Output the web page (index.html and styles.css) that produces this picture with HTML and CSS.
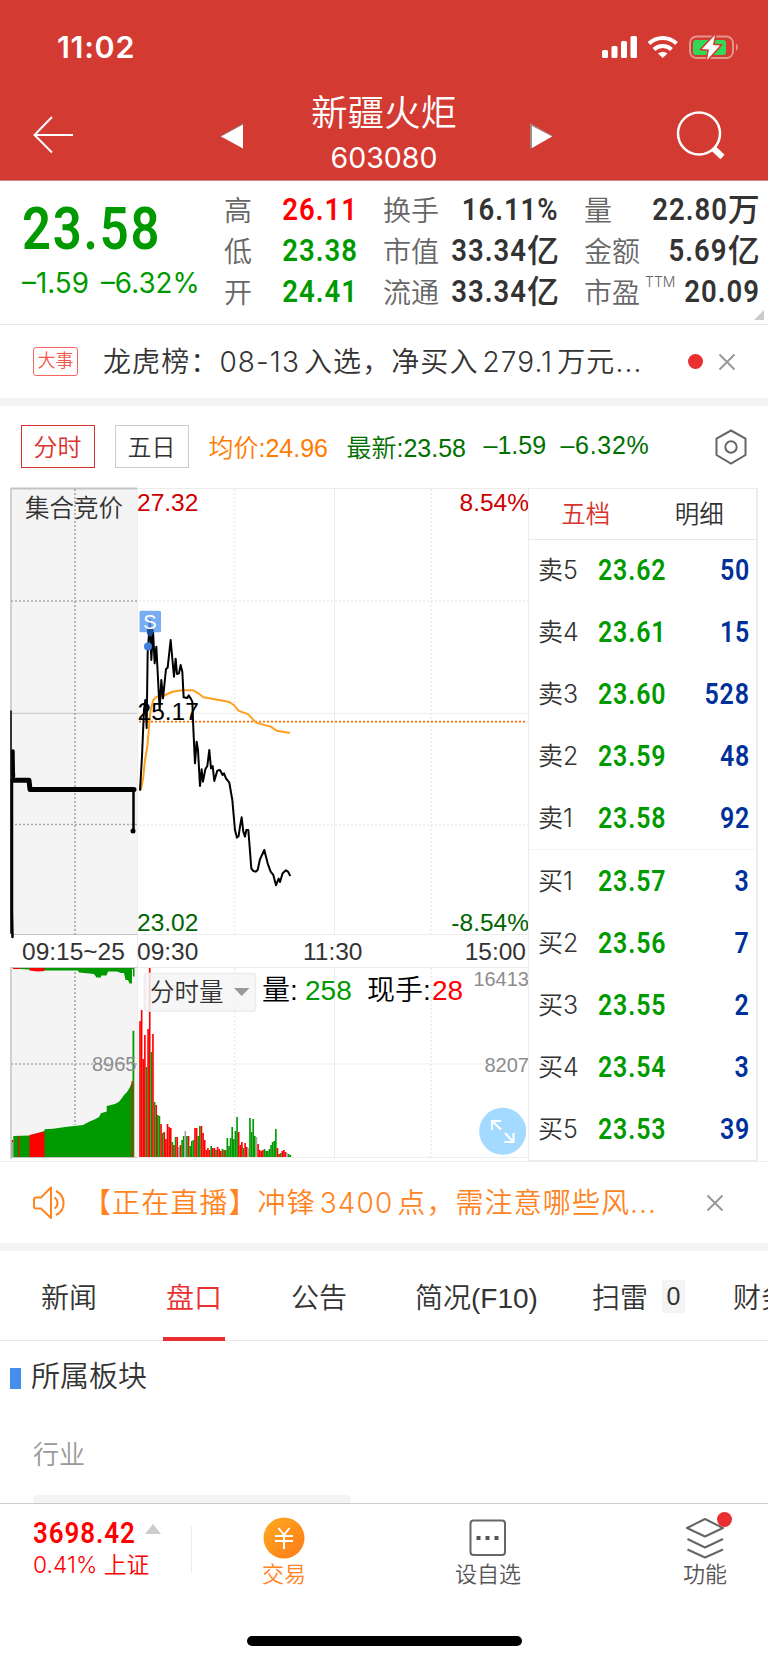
FILE: index.html
```html
<!DOCTYPE html>
<html lang="zh-CN">
    <head>
        <meta charset="UTF-8" />
        <meta name="viewport" content="width=device-width, initial-scale=1.0" />
        <title>新疆火炬 603080</title>
        <link rel="stylesheet" href="styles.css" />
    </head>
    <body>
        <header class="header">
            <div class="status-bar">
                <span class="clock">11:02</span>
                <svg class="status-icons" width="138" height="26" viewBox="601 34 138 26">
                    <g fill="#fff">
                        <rect x="602" y="50" width="6" height="8" rx="1.5" />
                        <rect x="611.5" y="46" width="6" height="12" rx="1.5" />
                        <rect x="621" y="41" width="6" height="17" rx="1.5" />
                        <rect x="630.500" y="36" width="6.500" height="22" rx="1.5" />
                    </g>
                    <g fill="none" stroke="#fff" stroke-width="4">
                        <path d="M649 43.500 A20 20 0 0 1 676.500 43.500" />
                        <path d="M654 49.500 A12.500 12.500 0 0 1 671.500 49.500" />
                    </g>
                    <path d="M658 53.500 Q662.700 50 667.500 53.500 L662.700 58 Z" fill="#fff" />
                    <rect x="690" y="36.500" width="43" height="21.500" rx="6.500" fill="none" stroke="#e6938e" stroke-width="2" />
                    <path d="M736 43.500 Q740 47 736 51 Z" fill="#e6938e" />
                    <rect x="693" y="40" width="33" height="15" rx="3" fill="#32d957" />
                    <path d="M715 35 L702 49 L709 49.500 L707 60 L720 45.500 L713 45 Z" fill="#fff" stroke="#d33a32" stroke-width="3" paint-order="stroke" />
                </svg>
            </div>
            <div class="nav">
                <svg class="back" width="42" height="38" viewBox="0 0 42 38">
                    <path d="M20 1 L2.500 19 L20 36.500 M2.500 19 H41" fill="none" stroke="#fff" stroke-width="2" />
                </svg>
                <svg class="prev" width="24" height="26" viewBox="0 0 24 26">
                    <path d="M0 13 L23 0 V4 L2 15 Z" fill="#a06a66" />
                    <path d="M1 13.500 L23 1.500 V25.500 Z" fill="#fff" />
                </svg>
                <div class="stock">
                    <div class="stock-name">新疆火炬</div>
                    <div class="stock-code">603080</div>
                </div>
                <svg class="next" width="24" height="26" viewBox="0 0 24 26">
                    <path d="M0 0 L23 13 L0 26 Z" fill="#a08885" />
                    <path d="M2 3 L22 13.500 L2 25 Z" fill="#fff" />
                </svg>
                <svg class="search" width="50" height="50" viewBox="0 0 50 50">
                    <circle cx="23" cy="23.500" r="21" fill="none" stroke="#fff" stroke-width="2.500" />
                    <path d="M37 38 L46.500 47" stroke="#fff" stroke-width="6" />
                </svg>
            </div>
        </header>

        <section class="quote">
            <div class="price-box">
                <div class="price"><span class="din">23.58</span></div>
                <div class="change"><span>–1.59</span><span>–6.32%</span></div>
            </div>
            <dl class="stats stats-a">
                <dt>高</dt>
                <dd class="red"><span class="din">26.11</span></dd>
                <dt>低</dt>
                <dd class="green"><span class="din">23.38</span></dd>
                <dt>开</dt>
                <dd class="green"><span class="din">24.41</span></dd>
            </dl>
            <dl class="stats stats-b">
                <dt>换手</dt>
                <dd><span class="din">16.11%</span></dd>
                <dt>市值</dt>
                <dd><span class="din">33.34</span>亿</dd>
                <dt>流通</dt>
                <dd><span class="din">33.34</span>亿</dd>
            </dl>
            <dl class="stats stats-c">
                <dt>量</dt>
                <dd><span class="din">22.80</span>万</dd>
                <dt>金额</dt>
                <dd><span class="din">5.69</span>亿</dd>
                <dt>市盈<sup>TTM</sup></dt>
                <dd><span class="din">20.09</span></dd>
            </dl>
            <i class="corner"></i>
        </section>

        <section class="event">
            <span class="event-tag">大事</span>
            <span class="event-text">龙虎榜：08-13 入选，净买入 279.1 万元...</span>
            <i class="dot"></i>
            <svg class="close" width="18" height="18" viewBox="0 0 18 18"><path d="M1.500 1.500 L16.500 16.500 M16.500 1.500 L1.500 16.500" /></svg>
        </section>

        <section class="toolbar">
            <button class="period active">分时</button>
            <button class="period">五日</button>
            <span class="avg">均价:24.96</span>
            <span class="latest">最新:23.58</span>
            <span class="diff">–1.59</span>
            <span class="rate">–6.32%</span>
            <svg class="setting" width="32" height="36" viewBox="0 0 32 36" fill="none" stroke="#666" stroke-width="2">
                <path d="M16 1.500 L30.500 9.500 V26 L16 34.500 L1.500 26 V9.500 Z" />
                <circle cx="16" cy="18" r="5.700" />
            </svg>
        </section>

        <section class="market">
            <svg class="chart" width="528" height="673" viewBox="0 488 528 673">
                <!-- 集合竞价 -->
                <rect x="11" y="488" width="126" height="446" fill="#f4f4f4" />
                <rect x="11" y="967" width="126" height="190" fill="#f4f4f4" />
                <g stroke="#c4c4c4" fill="none">
                    <path d="M10.500 488.500 H137" stroke-width="2" />
                    <path d="M11 488 V934 M11 967 V1159" stroke-width="1.500" />
                    <path d="M11 713.300 H137 M11 934.500 H137 M11 967.500 H137 M11 1157.500 H137" />
                    <path d="M75 489 V935 M75 968 V1125 M11 601 H137 M11 824.500 H137 M11 1064 H137" stroke="#aaa" stroke-width="1.700" stroke-dasharray="2 2" />
                </g>
                <!-- 网格 -->
                <g stroke="#ececec" fill="none">
                    <path d="M137.500 488 V1157 M334.500 488 V934 M334.500 967 V1159 M138 488.500 H529 M138 713.300 H529 M138 934.500 H529 M138 967.500 H529 M138 1157.500 H529" />
                    <path d="M234.700 489 V934 M431 489 V934 M234.700 968 V1157 M431 968 V1157 M139 601 H529 M139 825 H529 M139 1064 H485" stroke-width="1.700" stroke-dasharray="2 2" />
                </g>
                <path d="M139 721.700 H527" stroke="#ff6a00" stroke-width="1.700" stroke-dasharray="2 2" />

                <text class="t cjk" x="25" y="517">集合竞价</text>
                <text class="t up" x="137" y="511">27.32</text>
                <text class="t up" x="529" y="511" text-anchor="end">8.54%</text>
                <text class="t down" x="137" y="930.500">23.02</text>
                <text class="t down" x="529" y="930.500" text-anchor="end">-8.54%</text>

                <!-- 竞价走势 -->
                <g stroke="#000" fill="none" stroke-linecap="round" stroke-linejoin="round">
                    <path d="M11 711 V933" stroke-width="1.500" />
                    <path d="M12.500 751 L14 776 L12 781 V912 L12.500 937" stroke-width="2.500" />
                    <path d="M13 751 V776" stroke-width="3.500" />
                    <path d="M13 780.300 H29 L30 789.500 H134" stroke-width="5" />
                    <path d="M133.500 790 V830" stroke-width="2.500" />
                </g>
                <circle cx="133" cy="831" r="2.500" />

                <!-- 分时走势 -->
                <g transform="translate(0 600) scale(.3333)" fill="none" stroke-linejoin="round">
                    <polyline id="avgLine" stroke="#ff9f1c" stroke-width="6" />
                    <polyline id="priceLine" stroke="#000" stroke-width="6" />
                </g>
                <text class="t" x="137.500" y="720">25.17</text>
                <rect x="139.500" y="610.700" width="21.500" height="21.500" rx="1.500" fill="#5799ed" fill-opacity=".8" />
                <path d="M147 628 h6 v6 l-3 3 l-3 -3 Z" fill="#1d4f97" />
                <text class="mark" x="150" y="628.500" text-anchor="middle">S</text>
                <circle cx="148" cy="646.500" r="4" fill="#3f80db" />

                <text class="t time" x="22" y="959.500">09:15~25</text>
                <text class="t time" x="137" y="959.500">09:30</text>
                <text class="t time" x="303" y="959.500">11:30</text>
                <text class="t time" x="526" y="959.500" text-anchor="end">15:00</text>

                <!-- 竞价量 -->
                <path d="M11 1140 H13 V1157 H11 Z" fill="#aaa" />
                <path d="M13.300 1136 L29.500 1135.500 L44.500 1131 V1129.300 L53 1128.700 L67 1126.700 L77 1125.700 L83 1125 L89 1121.700 L95 1119.300 L99 1117 L101 1113.300 L106.700 1111.500 V1106 L115 1104 L119 1101.700 L122 1098 L124 1095 L127 1092 L129.500 1088 L131.700 1083 H132.500 V1030.700 H134.300 V1157 H13.300 Z" fill="#009a00" />
                <path d="M29.500 1135 L44.500 1131.500 V1157 H29.500 Z M18 1136 H19.200 V1157 H18 Z M12 1140 H13.300 V1142 H12 Z M131.500 1081 H132.700 V1157 H131.500 Z" fill="#f00" />
                <path d="M20 968 H134.500 V976.500 H133 V969 H132 V983.500 H129.500 L128 980 H125.500 L124 973 H121 L117 971.500 H108 L106.500 975.500 H101 V977.500 H96.500 L94 974 L79 972.500 L78 970.500 H45 L20 969 Z" fill="#009a00" />
                <path d="M29.500 968 H44.500 V971 L38 971.500 L29.500 970.500 Z M13 968 H20 V969 H13 Z" fill="#f00" />

                <g id="volume"></g>

                <text class="t vol" x="136.500" y="1070.500" text-anchor="end">8965</text>
                <text class="t vol" x="529" y="986" text-anchor="end">16413</text>
                <text class="t vol" x="529" y="1071.500" text-anchor="end">8207</text>

                <rect x="144.500" y="973.500" width="111" height="37.500" rx="2" fill="#f4f4f4" fill-opacity=".85" stroke="#ececec" stroke-width="1.500" />
                <text class="t cjk" x="150" y="1001">分时量</text>
                <path d="M234 988 H249.500 L241.700 996 Z" fill="#999" />
                <text class="v" x="262" y="999.500">量:</text>
                <text class="v green-fill" x="305" y="999.500">258</text>
                <text class="v" x="367" y="999.500">现手:</text>
                <text class="v red-fill" x="432" y="999.500">28</text>

                <circle cx="502.700" cy="1131.300" r="23.500" fill="#a4daff" />
                <path d="M501 1129.500 L492 1121 M492 1130 V1121 H501 M505 1133 L513.500 1142 M513.500 1133 V1142 H504.500" fill="none" stroke="#fff" stroke-width="2" />
            </svg>

            <div class="book">
                <div class="book-tabs"><span class="active">五档</span><span>明细</span></div>
                <div class="book-row"><span>卖5</span><b><span class="din">23.62</span></b><em><span class="din">50</span></em></div>
                <div class="book-row"><span>卖4</span><b><span class="din">23.61</span></b><em><span class="din">15</span></em></div>
                <div class="book-row"><span>卖3</span><b><span class="din">23.60</span></b><em><span class="din">528</span></em></div>
                <div class="book-row"><span>卖2</span><b><span class="din">23.59</span></b><em><span class="din">48</span></em></div>
                <div class="book-row last-sell"><span>卖1</span><b><span class="din">23.58</span></b><em><span class="din">92</span></em></div>
                <div class="book-row"><span>买1</span><b><span class="din">23.57</span></b><em><span class="din">3</span></em></div>
                <div class="book-row"><span>买2</span><b><span class="din">23.56</span></b><em><span class="din">7</span></em></div>
                <div class="book-row"><span>买3</span><b><span class="din">23.55</span></b><em><span class="din">2</span></em></div>
                <div class="book-row"><span>买4</span><b><span class="din">23.54</span></b><em><span class="din">3</span></em></div>
                <div class="book-row"><span>买5</span><b><span class="din">23.53</span></b><em><span class="din">39</span></em></div>
            </div>
        </section>

        <section class="live">
            <svg width="34" height="34" viewBox="0 0 34 34" fill="none" stroke="#ff841f" stroke-width="2" stroke-linejoin="round">
                <path d="M18 1.500 V32 L8 22.500 H3 Q1 22.500 1 20.500 V13.500 Q1 11.500 3 11.500 H8 Z" />
                <path d="M21.500 11.500 A6.500 6.500 0 0 1 21.500 22.500 M23 5 A13.300 13.300 0 0 1 23 29" />
            </svg>
            <span class="live-text">【正在直播】冲锋 3400 点，需注意哪些风...</span>
            <svg class="close" width="18" height="18" viewBox="0 0 18 18"><path d="M1.500 1.500 L16.500 16.500 M16.500 1.500 L1.500 16.500" /></svg>
        </section>

        <nav class="tabs">
            <a>新闻</a>
            <a class="active">盘口</a>
            <a>公告</a>
            <a class="f10">简况(F10)</a>
            <a class="mine">扫雷<span class="badge">0</span></a>
            <a class="finance">财务</a>
        </nav>

        <section class="plate">
            <h2>所属板块</h2>
            <div class="plate-label">行业</div>
            <div class="plate-card"></div>
        </section>

        <footer class="footer">
            <div class="index">
                <div class="index-value"><span class="din">3698.42</span><i></i></div>
                <div class="index-rate">0.41% 上证</div>
            </div>
            <div class="action trade">
                <svg width="42" height="42" viewBox="0 0 42 42">
                    <defs>
                        <linearGradient id="gold" x1="0" y1="0" x2="1" y2="1">
                            <stop offset="0" stop-color="#ffab1f" />
                            <stop offset="1" stop-color="#fd7a1a" />
                        </linearGradient>
                    </defs>
                    <circle cx="21" cy="21" r="20.500" fill="url(#gold)" />
                    <path d="M15.500 11 L21 18 L26.500 11 M12 19 H30 M12 24 H30 M21 18 V32" fill="none" stroke="#fff" stroke-width="2" />
                </svg>
                <span>交易</span>
            </div>
            <div class="action pick">
                <svg width="42" height="42" viewBox="0 0 42 42">
                    <rect x="3.500" y="3.500" width="34.500" height="34.500" rx="3" fill="none" stroke="#666" stroke-width="2" />
                    <path d="M9.500 21 h4 m5 0 h4 m5 0 h4" stroke="#555" stroke-width="4" />
                </svg>
                <span>设自选</span>
            </div>
            <div class="action more">
                <svg width="42" height="42" viewBox="0 0 42 42" fill="none" stroke="#666" stroke-width="2" stroke-linejoin="round">
                    <path d="M3 11 L21 2 L39 11 L21 19.500 Z M3.500 22 L21 30.500 L39 22 M3.500 32.500 L21 40.500 L39 32.500" />
                </svg>
                <i class="dot"></i>
                <span>功能</span>
            </div>
            <div class="home-bar"></div>
        </footer>

        <script src="chart.js"></script>
    </body>
</html>
```

FILE: styles.css
```css
* {
    box-sizing: border-box;
}

body {
    width: 768px;
    height: 1663px;
    margin: 0;
    overflow: hidden;
    background: #fff;
    color: #333;
    font-family: Inter, 'Noto Sans CJK SC', sans-serif;
    font-weight: 350;
}

svg {
    display: block;
    flex: none;
}

/* 数字字体，略窄 */
.din {
    display: inline-block;
    font-family: Roboto, sans-serif;
    font-weight: 600;
    letter-spacing: 0.035em;
    transform: scaleX(0.86);
    transform-origin: left center;
}

.red {
    color: #f00;
}

.green {
    color: #009a00;
}

/* 顶部 */
.header {
    height: 181px;
    background: #d33a32;
    border-bottom: 1px solid #c48c88;
    color: #fff;
}

.status-bar {
    display: flex;
    justify-content: space-between;
    height: 94px;
    padding: 34px 29px 0 57px;
}

.clock {
    font-size: 30.5px;
    font-weight: 600;
    letter-spacing: 0.7px;
    line-height: 26px;
}

.nav {
    display: flex;
    align-items: center;
    height: 86px;
    padding: 0 42px 4px 32px;
}

.prev {
    margin-left: 146px;
    margin-top: 1px;
}

.stock {
    width: 286px;
    text-align: center;
    padding-right: 6px;
}

.next {
    margin-top: 1px;
}

.stock-name {
    font-size: 36.5px;
    line-height: 42px;
}

.stock-code {
    font-size: 28.5px;
    font-weight: 400;
    line-height: 42px;
    padding-top: 3px;
}

.search {
    margin-left: 122px;
}

/* 行情 */
.quote {
    position: relative;
    display: flex;
    height: 144px;
    border-bottom: 1px solid #e8e8e8;
}

.price-box {
    width: 224px;
    padding: 12px 0 0 22px;
    color: #009a00;
}

.price {
    font-size: 59px;
    line-height: 70px;
}

.change {
    display: flex;
    gap: 12px;
    font-size: 27.8px;
    font-weight: 400;
    line-height: 38px;
}

.stats {
    display: grid;
    grid-template-columns: auto 1fr;
    grid-auto-rows: 41px;
    align-content: start;
    margin: 0;
    padding-top: 8px;
    line-height: 41px;
    white-space: nowrap;
}

.stats dt {
    padding-top: 2px;
    color: #666;
    font-size: 28px;
}

.stats dd {
    display: flex;
    justify-content: flex-end;
    margin: 0;
    font-size: 32px;
    font-weight: 500;
}

.stats .din {
    transform-origin: right center;
}

.stats-a {
    width: 134px;
}

.stats-b {
    width: 176px;
    margin-left: 25px;
}

.stats-c {
    width: 175px;
    margin-left: 25px;
}

.stats sup {
    position: absolute;
    margin: -12px 0 0 5px;
    font-size: 14px;
}

.corner {
    position: absolute;
    right: 4px;
    bottom: 4px;
    border: solid transparent;
    border-width: 5px;
    border-right-color: #ccc;
    border-bottom-color: #ccc;
}

.event {
    display: flex;
    align-items: center;
    height: 81px;
    padding: 0 24px 0 33px;
    border-bottom: 8px solid #f4f4f4;
}

.event-tag {
    width: 45px;
    height: 29px;
    border: 1px solid #f7665e;
    border-radius: 3px;
    color: #f4574e;
    font-size: 18px;
    line-height: 26px;
    text-align: center;
}

.event-text {
    width: 565px;
    margin-left: 25px;
    padding-bottom: 4px;
    font-size: 28px;
    letter-spacing: 1.1px;
    word-spacing: -5px;
    white-space: nowrap;
}

.dot {
    width: 15px;
    height: 15px;
    border-radius: 50%;
    background: #e92f30;
}

.event .dot {
    margin-left: 20px;
}

.close {
    fill: none;
    stroke: #999;
    stroke-width: 2;
}

.event .close {
    margin-left: 15px;
}

/* 分时工具栏 */
.toolbar {
    display: flex;
    align-items: center;
    height: 82px;
    padding-left: 20.5px;
    font-family: 'Liberation Sans', 'Noto Sans CJK SC', sans-serif;
    font-size: 25px;
    white-space: nowrap;
    color: #007000;
}

.period {
    width: 74px;
    height: 43px;
    margin: 0 20px 2px 0;
    padding: 0 0 2px;
    border: 1px solid #ccc;
    background: #fff;
    color: #333;
    font: 350 24px 'Noto Sans CJK SC', sans-serif;
}

.period.active {
    border-color: #d9332e;
    color: #d9332e;
}

.toolbar > span {
    padding-bottom: 3px;
}

.avg {
    width: 138px;
    color: #ff7a00;
}

.latest {
    width: 137px;
}

.diff {
    width: 77px;
}

.rate {
    letter-spacing: 0.7px;
}

.setting {
    margin-left: auto;
    margin-right: 21px;
}

.market {
    display: flex;
    height: 674px;
    border-bottom: 1px solid #ececec;
}

.chart {
    font-family: 'Liberation Sans', 'Noto Sans CJK SC', sans-serif;
    overflow: visible;
}

.t {
    font-size: 24.5px;
}

.cjk,
.time {
    fill: #333;
}

.up {
    fill: #c00;
}

.down {
    fill: #006400;
}

.t.vol {
    font-size: 20px;
    fill: #8c8c8c;
}

.v {
    font-size: 28px;
}

.green-fill {
    fill: #009a00;
}

.red-fill {
    fill: #f00;
}

.mark {
    font-size: 20px;
    fill: #fff;
}

.book {
    width: 230px;
    border: 1px solid #ececec;
    border-width: 1px 2px 1px 1px;
}

.book-tabs {
    display: flex;
    height: 51px;
    border-bottom: 1px solid #e8e8e8;
    font-size: 24.5px;
    line-height: 50px;
}

.book-tabs span {
    width: 50%;
    text-align: center;
}

.book-row {
    display: flex;
    align-items: center;
    height: 62.1px;
    padding: 0 6px 3px 9px;
    font-size: 25px;
}

.book-tabs .active {
    color: #d9332e;
}

.book-row > span {
    width: 60px;
    padding-bottom: 3px;
}

.book-row b {
    color: #009a00;
    font-size: 29px;
}

.book-row em {
    margin-left: auto;
    color: #00309a;
    font-size: 29px;
    font-style: normal;
}

.book-row em .din {
    transform-origin: right center;
}

.last-sell {
    border-bottom: 1px solid #f4f4f4;
}

.live {
    display: flex;
    align-items: center;
    height: 89px;
    padding-left: 33px;
    border-bottom: 8px solid #f4f4f4;
    color: #ff841f;
}

.live-text {
    width: 589px;
    margin-left: 16px;
    padding-bottom: 4px;
    font-size: 28px;
    letter-spacing: 1.1px;
    word-spacing: -5px;
    white-space: nowrap;
}

.live .close {
    margin-left: 34px;
}

.tabs {
    display: flex;
    height: 90px;
    padding-left: 41px;
    border-bottom: 1px solid #e8e8e8;
    font-family: 'Liberation Sans', 'Noto Sans CJK SC', sans-serif;
    font-size: 28px;
    line-height: 95px;
    white-space: nowrap;
}

.tabs a {
    flex: none;
    margin-right: 69px;
}

.tabs .active {
    position: relative;
    color: #e92f30;
}

.tabs .active::after {
    content: '';
    position: absolute;
    left: -3px;
    right: -3px;
    bottom: -1px;
    height: 4px;
    background: #e92f30;
}

.tabs .f10 {
    margin-left: -1px;
    margin-right: 54px;
}

.tabs .mine {
    display: flex;
    align-items: start;
    margin-right: 48px;
}

.badge {
    width: 23px;
    height: 33px;
    margin: 29px 0 0 14px;
    background: #f4f4f4;
    font-size: 25px;
    line-height: 33px;
    text-align: center;
}

.plate {
    height: 162px;
    overflow: hidden;
}

.plate h2 {
    display: flex;
    align-items: flex-start;
    height: 75px;
    margin: 0;
    padding: 15px 0 0 10px;
    font-size: 29px;
    font-weight: 350;
    line-height: 42px;
}

.plate h2::before {
    content: '';
    width: 11px;
    height: 21px;
    margin: 12px 10px 0 0;
    background: #468eeb;
}

.plate-label {
    height: 79px;
    padding-left: 33px;
    color: #999;
    font-size: 26px;
    line-height: 77px;
}

.plate-card {
    width: 318px;
    height: 40px;
    margin-left: 33px;
    border-radius: 4px;
    background: #f4f4f4;
}

/* 底部 */
.footer {
    position: relative;
    display: flex;
    height: 160px;
    border-top: 1px solid #ccc;
}

.index {
    width: 192px;
    padding: 12px 0 0 33px;
    background: linear-gradient(#ececec, #ececec) 191px 22px / 1px 47px no-repeat;
    color: #f00;
}

.index-value {
    display: flex;
    align-items: center;
    height: 34px;
    font-size: 29.5px;
}

.index-value .din {
    width: 112px;
    transform: scaleX(0.88);
}

.index-value i {
    border: 8px solid transparent;
    border-top: 0;
    border-bottom: 10px solid #ccc;
    margin-bottom: 8px;
}

.index-rate {
    font-size: 22.8px;
    line-height: 30px;
    white-space: nowrap;
}

.action {
    position: relative;
    display: flex;
    flex-direction: column;
    align-items: center;
    width: 68px;
    padding-top: 13px;
    color: #555;
    font-size: 22px;
    line-height: 30px;
}

.trade {
    margin-left: 58px;
    color: #ff841f;
}

.pick {
    margin-left: 136px;
}

.more {
    margin-left: 149px;
}

.more .dot {
    position: absolute;
    right: 7px;
    top: 8px;
}

.home-bar {
    position: absolute;
    left: 247px;
    bottom: 17px;
    width: 275px;
    height: 10px;
    border-radius: 5px;
    background: #000;
}
```

FILE: chart.js
```js
// 分时线与均线
const price = '420,572 426,470 432,330 436,300 440,384 443,160 450,60 454,180 459,90 464,190 469,140 479,330 484,240 489,295 498,207 503,203 512,120 522,230 527,176 531,222 537,220 542,195 547,215 551,292 562,294 566,286 572,295 577,305 580,385 585,490 590,425 594,450 600,558 605,508 609,545 616,508 622,498 628,450 633,505 638,498 643,543 652,512 660,510 668,525 672,520 678,535 688,548 697,600 705,690 711,713 716,708 720,680 725,652 730,695 735,710 739,690 745,690 749,740 754,805 760,813 767,815 773,810 780,778 793,750 803,790 812,815 820,825 828,856 836,836 840,846 848,820 858,811 864,815 871,828';
const avg = '423,570 430,530 435,480 442,440 447,380 452,330 460,300 470,290 490,288 515,276 545,271 580,271 595,280 610,292 640,297 685,305 702,315 715,332 745,343 768,368 790,374 812,380 830,392 870,399';

// 每分钟成交量，r 涨 g 跌 n 平
const volume = 'r136 r147 r98 r122 g90 r128 r189 g105 r123 g55 r52 g42 g41 r33 g24 r25 r18 r33 r30 r29 g15 r12 g20 r20 n10 r12 g17 g21 n26 g21 r21 g11 g16 g17 r29 r29 g21 g31 r31 r24 r17 r7 r9 r7 g11 r9 r9 g7 r10 r8 r6 g8 r7 g7 g19 g11 g19 g30 g18 g26 g40 r25 r12 r15 g9 r14 r10 n9 g39 g25 g38 g21 n20 r13 r7 r6 r7 g8 g6 g6 g8 g12 g15 g16 g28 r9 r3 g4 r6 r7 r5 n4 g3 g2';
const colors = { r: '#f00', g: '#009a00', n: '#aaa' };

document.getElementById('priceLine').setAttribute('points', price);
document.getElementById('avgLine').setAttribute('points', avg);

const layer = document.getElementById('volume');
volume.split(' ').forEach((item, i) => {
    const height = Number(item.slice(1));
    const bar = document.createElementNS('http://www.w3.org/2000/svg', 'rect');
    bar.setAttribute('x', 139.2 + i * 1.617);
    bar.setAttribute('y', 1157 - height);
    bar.setAttribute('width', 1.65);
    bar.setAttribute('height', height);
    bar.setAttribute('fill', colors[item[0]]);
    layer.appendChild(bar);
});
```
